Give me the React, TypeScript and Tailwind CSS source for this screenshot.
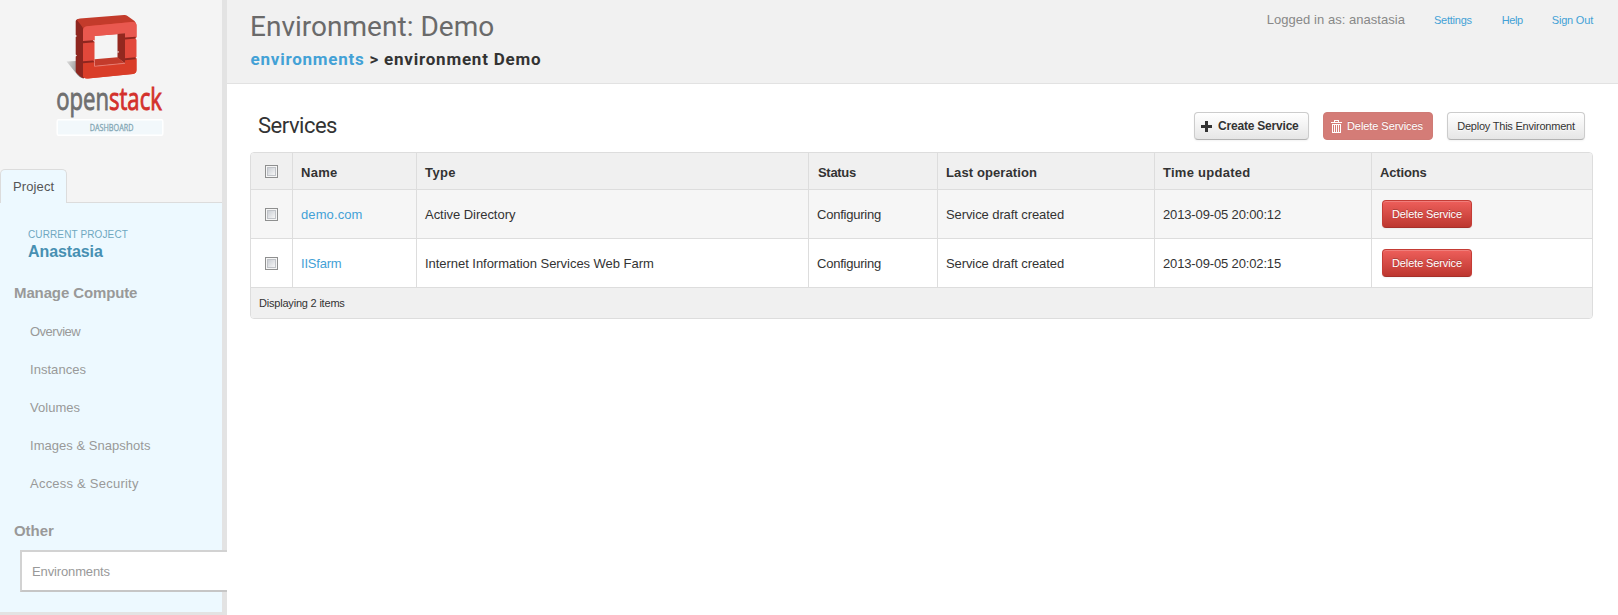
import type { ReactNode } from "react";

function Logo() {
  return (
    <svg width="110" height="128" viewBox="55 12 110 128" className="ml-[55px] mt-3 block" role="img">
      <defs>
        <linearGradient id="shadow" x1="0" x2="1" y1="0" y2="0.3">
          <stop offset="0" stopColor="#dedede" />
          <stop offset="1" stopColor="#808080" />
        </linearGradient>
      </defs>
      <path d="M66.5 61.5 L76 61 L83 78.5 Q80 78 77.5 75 Z" fill="url(#shadow)" />
      <path d="M75.7 21 Q76 19.3 78 19 L86 24 L84 78.6 Q81.5 78 77.5 74 Q75.7 72.5 75.7 71 V56.5 L77 55.5 L75.7 54.5 V37 L77 36 L75.7 35 Z" fill="#8e261f" />
      <path d="M77 20.3 Q77.5 18.8 80 18.5 L124 15 Q126 14.8 127.5 15.9 L134.5 21 Q136 22.5 136 25 L84 30 Q82.5 27 80.5 24.5 Z" fill="#c33b2b" />
      <path
        fillRule="evenodd"
        d="M83 31 Q83 26.8 87 26.3 L132 22 Q136.5 21.6 136.5 25.5 V37.3 L135.3 38.6 L136.5 39.8 V56.8 L135.3 58 L136.5 59.2 V70 Q136.5 73.6 133 74 L88 78.4 Q83 78.9 83 75 Z M94.5 36 V66.3 L125 63.3 V33.4 Z"
        fill="#e2483b"
      />
      <path d="M83 31 Q83 26.8 87 26.3 L132 22 Q136.5 21.6 136.5 25.5 V37.3 L125 38.3 V33.4 L94.5 36 V40.7 L83 41.7 Z" fill="#e9584f" />
      <path d="M83 62.5 L94.5 61.5 V66.3 L125 63.3 V58.9 L136.5 57.9 V70 Q136.5 73.6 133 74 L88 78.4 Q83 78.9 83 75 Z" fill="#d93d28" />
      <path d="M117.5 33.9 L125 33.3 V63.3 L117.5 58 Z" fill="#93281f" />
      <path d="M94.5 59.3 L117.5 57.3 L125 63.2 L94.5 66.2 Z" fill="#c33b2b" />
      <path d="M94.5 60.5 V66.3 L125 63.3" fill="none" stroke="#ef8f86" strokeWidth="0.7" />
      <path d="M83 41 L93 40.2 L94.5 42.2 L83 43.2 Z M83 61.3 L93 60.5 L94.5 62.3 L83 63.2 Z M125 37.6 L135.6 36.8 V38.6 L125 39.6 Z M125 58.3 L135.6 57.3 V59.2 L125 60.2 Z" fill="#8e261f" />
      <path d="M92.8 40.6 L94.6 40 V42 Z M117.6 50.8 L119.2 51.9 L117.6 53 Z" fill="#f8eeee" />
      <text transform="translate(56.2 110) scale(0.713 1)" fontFamily="Open Sans, sans-serif" fontSize="31" strokeWidth="0.9"><tspan fill="#6f6f6f" stroke="#6f6f6f">open</tspan><tspan fill="#d3302b" stroke="#d3302b">stack</tspan></text>
      <rect x="57.2" y="119.7" width="105.6" height="15.6" rx="1.5" fill="#f2f8fb" stroke="#ffffff" strokeWidth="1.4" />
      <text x="89.8" y="130.7" textLength="43.6" lengthAdjust="spacingAndGlyphs" fontFamily="Open Sans, sans-serif" fontSize="9" fill="#83a7b5" stroke="#83a7b5" strokeWidth="0.3">DASHBOARD</text>
    </svg>
  );
}

const compute = [
  { label: "Overview", cls: "tracking-[-0.5px]" },
  { label: "Instances", cls: "tracking-[0.04px]" },
  { label: "Volumes", cls: "tracking-[0.02px]" },
  { label: "Images & Snapshots", cls: "tracking-[0.03px]" },
  { label: "Access & Security", cls: "tracking-[0.23px]" },
];

function Sidebar() {
  return (
    <aside className="flex h-[615px] w-[227px] shrink-0 flex-col border-r-[5px] border-b-[3px] border-[#e3e3e3] bg-[#f4f4f4]">
      <Logo />
      <div className="mt-[29px] flex h-[34px]">
        <div className="w-[67px] rounded-t-[5px] border border-b-0 border-[#dcdcdc] bg-[#edf9ff] pl-3 pt-2 text-[13px] leading-[18px] tracking-[0.11px] text-[#555]">
          Project
        </div>
        <div className="flex-1 border-b border-[#dcdcdc]" />
      </div>
      <div className="flex-1 bg-[#edf9ff] pt-[25px] text-[#999]">
        <div className="pl-7 text-[10px] leading-[14px] tracking-[0.12px] text-[#6fa8bf]">CURRENT PROJECT</div>
        <div className="pl-7 text-[16px] font-bold leading-[19px] tracking-[-0.1px] text-[#4790b2]">Anastasia</div>
        <h4 className="mt-[22px] pl-[14px] text-[15px] font-bold leading-5 tracking-[-0.12px]">Manage Compute</h4>
        <ul className="pt-[10px]">
          {compute.map((item) => (
            <li key={item.label} className={`pl-[30px] text-[13px] leading-[38px] ${item.cls}`}>
              {item.label}
            </li>
          ))}
        </ul>
        <h4 className="mt-[18px] pl-[14px] text-[15px] font-bold leading-5 tracking-[-0.05px]">Other</h4>
        <div className="ml-5 -mr-[5px] mt-[9px] h-[42px] border-y-2 border-l-2 border-[#d2d2d2] border-b-[#c6c6c6] bg-white pl-[10px] pt-px text-[13px] leading-[38px] tracking-[-0.13px]">
          Environments
        </div>
      </div>
    </aside>
  );
}

function Checkbox() {
  return (
    <span className="mx-auto block h-[13px] w-[13px] border border-[#8e8f8f] bg-[#f6f6f6] p-px">
      <span className="block h-full w-full border border-[#c0c3c8] bg-linear-to-br from-[#cbcfd5] to-[#f6f6f6]" />
    </span>
  );
}

const cell = "border-b border-[#ddd] align-middle";

function Td({ children, className = "" }: { children: ReactNode; className?: string }) {
  return <td className={`${cell} h-[49px] border-r pl-2 pt-[2px] ${className}`}>{children}</td>;
}

const rows = [
  { name: "demo.com", nameCls: "tracking-[0.1px]", type: "Active Directory", time: "2013-09-05 20:00:12", bg: "bg-[#f6f6f6]" },
  { name: "IISfarm", nameCls: "tracking-[-0.2px]", type: "Internet Information Services Web Farm", time: "2013-09-05 20:02:15", bg: "bg-white" },
];

const headers = [
  { label: "Name", cls: "tracking-[0.3px]" },
  { label: "Type", cls: "tracking-[0.4px]" },
  { label: "Status", cls: "pl-[9px] tracking-[-0.3px]" },
  { label: "Last operation", cls: "tracking-[0.11px]" },
  { label: "Time updated", cls: "tracking-[0.27px]" },
];

function ServicesTable() {
  return (
    <div className="mt-3 w-[1343px] overflow-hidden rounded-[4px] border border-[#ddd]">
      <table className="w-[1341px] table-fixed border-separate border-spacing-0 text-left text-[13px] leading-[18px] text-[#333]">
        <colgroup>
          <col className="w-[42px]" />
          <col className="w-[124px]" />
          <col className="w-[392px]" />
          <col className="w-[129px]" />
          <col className="w-[217px]" />
          <col className="w-[217px]" />
          <col className="w-[220px]" />
        </colgroup>
        <thead className="bg-[#f0f0f0]">
          <tr>
            <th className={`${cell} h-[37px] border-r`}><Checkbox /></th>
            {headers.map((h) => (
              <th key={h.label} className={`${cell} border-r pl-2 pt-[4px] font-bold ${h.cls}`}>{h.label}</th>
            ))}
            <th className={`${cell} pl-2 pt-[4px] font-bold tracking-[-0.16px]`}>Actions</th>
          </tr>
        </thead>
        <tbody>
          {rows.map((r) => (
            <tr key={r.name} className={r.bg}>
              <td className={`${cell} h-[49px] border-r`}><Checkbox /></td>
              <Td className={r.nameCls}><a className="text-[#43a1d6]">{r.name}</a></Td>
              <Td className="tracking-[-0.04px]">{r.type}</Td>
              <Td className="tracking-[-0.23px]">Configuring</Td>
              <Td className="tracking-[-0.09px]">Service draft created</Td>
              <Td className="tracking-[-0.14px]">{r.time}</Td>
              <td className={`${cell} pl-[10px]`}>
                <button className="block h-7 w-[90px] rounded-[4px] border border-[#c43c35] border-b-[#a52f2a] bg-linear-to-b from-[#ee5f5b] to-[#bd362f] text-[11px] leading-[18px] tracking-[-0.11px] text-white shadow-[inset_0_1px_0_rgba(255,255,255,0.2),0_1px_2px_rgba(0,0,0,0.05)] text-shadow-[0_-1px_0_rgba(0,0,0,0.25)]">
                  Delete Service
                </button>
              </td>
            </tr>
          ))}
        </tbody>
      </table>
      <div className="h-[30px] bg-[#f0f0f0] pl-2 text-[11px] leading-[31px] tracking-[-0.2px] text-[#333]">Displaying 2 items</div>
    </div>
  );
}

const lightButton =
  "h-7 rounded-[4px] border border-[#ccc] border-b-[#b3b3b3] bg-linear-to-b from-white to-[#e6e6e6] text-[#333] shadow-[inset_0_1px_0_rgba(255,255,255,0.2),0_1px_2px_rgba(0,0,0,0.05)] text-shadow-[0_1px_1px_rgba(255,255,255,0.75)]";

export default function App() {
  return (
    <div className="flex h-[615px] w-[1618px] overflow-hidden bg-white font-['Liberation_Sans',Arial,sans-serif]">
      <Sidebar />
      <main className="flex-1">
        <header className="flex h-[84px] justify-between border-b border-[#e2e2e2] bg-[#f1f1f1] pl-[23px] pr-[25px] pt-[9px]">
          <div className="font-[Roboto,sans-serif]">
            <h1 className="text-[28px] leading-9 tracking-[0.02px] text-[#6a6a6a]">Environment: Demo</h1>
            <p className="mt-1 pl-[0.5px] text-[17px] font-bold leading-5 tracking-[0.77px] text-[#333]">
              <a className="text-[#43a1d6]">environments</a> &gt; environment Demo
            </p>
          </div>
          <div className="flex h-5 items-baseline pt-px text-[11px] leading-5 text-[#43a1d6]">
            <span className="mr-[29px] text-[13px] tracking-[0.04px] text-[#888]">Logged in as: anastasia</span>
            <a className="mr-[30px] tracking-[-0.25px]">Settings</a>
            <a className="mr-[29px] tracking-[-0.4px]">Help</a>
            <a className="tracking-[-0.2px]">Sign Out</a>
          </div>
        </header>
        <section className="pl-[23px] pt-7">
          <div className="flex h-7 items-center pl-2 pr-[33px]">
            <h2 className="mr-auto font-[Roboto,sans-serif] text-[22px] leading-7 tracking-[-0.5px] text-[#333]">Services</h2>
            <button className={`${lightButton} mr-[14px] flex w-[115px] items-center pl-[6px] text-[12px] font-bold tracking-[-0.2px]`}>
              <svg width="11" height="11" viewBox="0 0 11 11" className="mr-[6px]">
                <path d="M4 0h3v4h4v3H7v4H4V7H0V4h4z" fill="#333" />
              </svg>
              Create Service
            </button>
            <button className="mr-[14px] flex h-7 w-[110px] items-center rounded-[4px] border border-[#cf7b76] bg-[#d47c77] pl-[7px] text-[11px] tracking-[-0.07px] text-white text-shadow-[0_-1px_0_rgba(0,0,0,0.15)]">
              <svg width="11" height="13" viewBox="0 0 11 13" className="mr-[5px] shrink-0">
                <path fillRule="evenodd" d="M3 0h5v2h3v1H0V2h3z M4 1v1h3V1z M1 4h9v9H1z M2 5v7h1V5z M4 5v7h1V5z M6 5v7h1V5z M8 5v7h1V5z" fill="#fff" />
              </svg>
              Delete Services
            </button>
            <button className={`${lightButton} w-[138px] text-[11px] tracking-[-0.22px]`}>Deploy This Environment</button>
          </div>
          <ServicesTable />
        </section>
      </main>
    </div>
  );
}
